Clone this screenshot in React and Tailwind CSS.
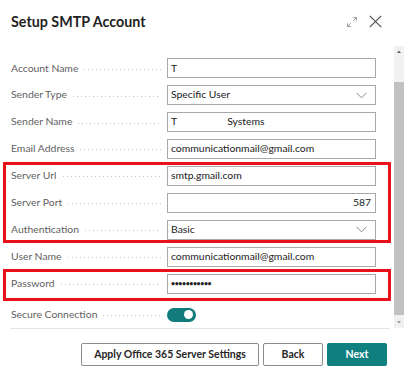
import React from "react";

const font = { fontFamily: 'Lato, "Open Sans", sans-serif' };

function Leader() {
  return (
    <div className="flex-1 h-px mx-[6px] mt-[2px] bg-[linear-gradient(to_right,#c8c8c8_1px,transparent_1px)] bg-[length:4px_1px] bg-repeat-x" />
  );
}

function Chevron() {
  return (
    <svg width="11" height="7" viewBox="0 0 11 7" className="mr-[8px]">
      <path d="M0.5 0.8 L5.5 5.8 L10.5 0.8" fill="none" stroke="#8a8a8a" strokeWidth="1" />
    </svg>
  );
}

function Row({ label, children }) {
  return (
    <div className="h-[27px] flex items-center pl-[8px] pr-[15px]">
      <div className="w-[156px] flex items-center text-[10.4px] text-[#5f5f5f]">
        <span className="whitespace-nowrap">{label}</span>
        <Leader />
      </div>
      {children}
    </div>
  );
}

function Input({ children, right, select }) {
  return (
    <div
      className={
        "flex-1 h-[20px] border border-[#a8a8a8] flex items-center pl-[3px] text-[10.4px] text-[#212121] whitespace-nowrap " +
        (right ? "justify-end pr-[4px]" : "justify-between")
      }
    >
      <div className="flex items-center">{children}</div>
      {select && <Chevron />}
    </div>
  );
}

export default function App() {
  return (
    <div className="w-[408px] h-[377px] bg-white overflow-hidden flex flex-col" style={font}>
      <div className="h-[46px] flex items-start pt-[10px] pl-[11px] pr-[26px] justify-between">
        <div className="text-[14.3px] font-bold text-[#1f1f1f] leading-[24px]">Setup SMTP Account</div>
        <div className="flex items-center gap-[11px] pt-[5px]">
          <svg width="12" height="12" viewBox="0 0 12 12">
            <path d="M1.5 10.5 L4.8 7.2 M7.2 4.8 L10.5 1.5 M7.3 1.5 H10.5 V4.7 M1.5 7.3 V10.5 H4.7" fill="none" stroke="#9a9a9a" strokeWidth="1" />
          </svg>
          <svg width="13" height="13" viewBox="0 0 13 13">
            <path d="M0.8 0.8 L12.2 12.2 M12.2 0.8 L0.8 12.2" fill="none" stroke="#505050" strokeWidth="1.2" />
          </svg>
        </div>
      </div>
      <div className="flex h-[282px]">
        <div className="w-[391px] pl-[3px] flex flex-col">
          <div className="h-[9px]" />
          <Row label="Account Name">
            <Input>T</Input>
          </Row>
          <Row label="Sender Type">
            <Input select>Specific User</Input>
          </Row>
          <Row label="Sender Name">
            <Input>
              <span>T</span>
              <span className="inline-block w-[50px]" />
              <span>Systems</span>
            </Input>
          </Row>
          <Row label="Email Address">
            <Input>communicationmail@gmail.com</Input>
          </Row>
          <div className="relative">
            <Row label="Server Url">
              <Input>smtp.gmail.com</Input>
            </Row>
            <Row label="Server Port">
              <Input right>587</Input>
            </Row>
            <Row label="Authentication">
              <Input select>Basic</Input>
            </Row>
            <div className="absolute inset-0 border-[3px] border-[#e8111c] pointer-events-none" />
          </div>
          <Row label="User Name">
            <Input>communicationmail@gmail.com</Input>
          </Row>
          <div className="relative">
            <Row label="Password">
              <Input>
                <span className="text-[7px] tracking-[-0.4px] font-bold">•••••••••••</span>
              </Input>
            </Row>
            <div className="absolute -top-[1px] -bottom-[4px] left-0 right-0 border-[3px] border-[#e8111c] pointer-events-none" />
          </div>
          <div className="h-[4px]" />
          <Row label="Secure Connection">
            <div className="flex-1 flex items-center">
              <div className="w-[29px] h-[14px] rounded-full bg-[#127b7b] flex items-center justify-end pr-[3px]">
                <div className="w-[9px] h-[9px] rounded-full bg-white" />
              </div>
            </div>
          </Row>
        </div>
        <div className="ml-[3px] w-[10px] bg-[#f1f1f1] flex flex-col items-center">
          <svg width="10" height="10" viewBox="0 0 10 10" className="mt-[1px]">
            <path d="M3 6 L5 3.5 L7 6 Z" fill="#606060" />
          </svg>
          <div className="w-[10px] h-[233px] mt-[25px] bg-[#c1c1c1]" />
          <svg width="10" height="10" viewBox="0 0 10 10" className="mt-[2px]">
            <path d="M3 4 L5 6.5 L7 4 Z" fill="#9a9a9a" />
          </svg>
        </div>
      </div>
      <div className="mx-[10px] mr-[18px] h-px bg-[#e3e3e3]" />
      <div className="flex justify-end gap-[4px] pr-[21px] pt-[14px]">
        <button className="h-[23px] w-[178px] border border-[#8c8c8c] rounded-[2px] text-[10.5px] font-bold text-[#262626] bg-white whitespace-nowrap">
          Apply Office 365 Server Settings
        </button>
        <button className="h-[23px] w-[60px] border border-[#8c8c8c] rounded-[2px] text-[10.5px] font-bold text-[#262626] bg-white">
          Back
        </button>
        <button className="h-[23px] w-[60px] rounded-[2px] text-[10.5px] font-bold text-white bg-[#0f7f80]">
          Next
        </button>
      </div>
    </div>
  );
}
